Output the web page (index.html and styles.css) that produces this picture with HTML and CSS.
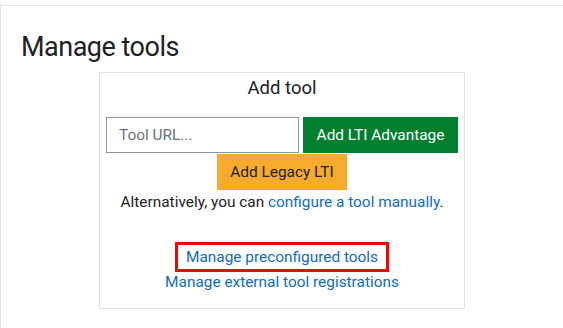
FILE: index.html
```html
<!DOCTYPE html>
<html lang="en">
<head>
  <meta charset="UTF-8" />
  <title>Manage tools</title>
  <link rel="stylesheet" href="styles.css">
</head>
<body>
  <div class="page">
    <h2>Manage tools</h2>

    <div class="card">
      <h3>Add tool</h3>

      <div class="add-row">
        <input type="text" id="toolUrl" placeholder="Tool URL..." />
        <button class="bt bt-success">Add LTI Advantage</button>
      </div>
      <button class="bt bt-warning">Add Legacy LTI</button>

      <p class="alt">Alternatively, you can <a href="#">configure a tool manually</a>.</p>

      <div class="links">
        <a href="#" class="highlight">Manage preconfigured tools</a>
        <a href="#">Manage external tool registrations</a>
      </div>
    </div>
  </div>
</body>
</html>
```

FILE: styles.css
```css
* {
  box-sizing: border-box;
}

body {
  margin: 0;
  font-family: Roboto, "Liberation Sans", sans-serif;
  font-size: 15.4px;
  color: #1d2125;
  background: #fff;
}

a {
  color: #0f6cbf;
  text-decoration: none;
}

.page {
  margin-top: 5px;
  border-top: 1px solid #dee2e6;
  border-left: 1px solid #dee2e6;
  padding: 24px 20px 20px;
  height: 323px;
}

h2 {
  margin: 0 0 8px;
  font-size: 27px;
  font-weight: 400;
  letter-spacing: -0.5px;
  line-height: 34px;
}

.card {
  width: 366px;
  margin: 0 auto;
  border: 1px solid #dee2e6;
  padding: 4px 6px 16px;
  text-align: center;
}

h3 {
  margin: 0 0 17px;
  font-size: 18.5px;
  font-weight: 400;
  line-height: 23px;
}

.add-row {
  display: flex;
  gap: 4px;
  justify-content: center;
  margin-bottom: 1px;
}

#toolUrl {
  width: 193px;
  height: 36px;
  padding: 6px 12px;
  border: 1px solid #8f959e;
  border-radius: 0;
  font: inherit;
  color: #1d2125;
  outline: none;
}

#toolUrl::placeholder {
  color: #6a737b;
}

.bt {
  height: 36px;
  padding: 0;
  border: none;
  border-radius: 0;
  font: inherit;
  white-space: nowrap;
  cursor: pointer;
}

.bt-success {
  background: #00802f;
  color: #fff;
  width: 155px;
}

.bt-warning {
  background: #f6ab2e;
  color: #1d2125;
  width: 130px;
}

.alt {
  margin: 1px 0 0;
  line-height: 22px;
}

.links {
  display: flex;
  flex-direction: column;
  align-items: center;
  margin-top: 29px;
  line-height: 20px;
}

.highlight {
  border: 3px solid #f00;
  padding: 0 8px;
  line-height: 24px;
}
```
